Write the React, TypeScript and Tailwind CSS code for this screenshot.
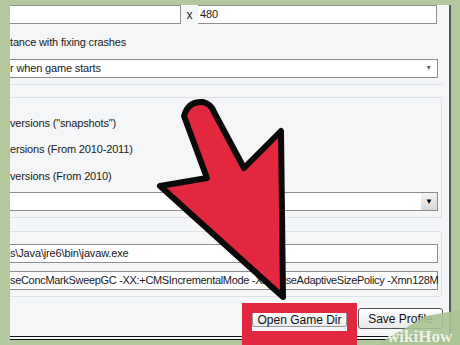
const font = { fontFamily: '"Liberation Sans", Arial, sans-serif' };

function Field({ children, className = "" }: { children?: React.ReactNode; className?: string }) {
  return (
    <div
      className={`flex h-[19px] items-center border border-l-0 border-[#8b8d8f] bg-white text-[11px] text-[#1a1a1a] ${className}`}
    >
      {children}
    </div>
  );
}

function Label({ children, className = "" }: { children: React.ReactNode; className?: string }) {
  return <div className={`h-[16px] text-[11px] leading-[16px] tracking-[-0.15px] text-[#1a1a1a] ${className}`}>{children}</div>;
}

function Arrow() {
  return (
    <svg className="pointer-events-none absolute left-0 top-0" width="460" height="345" viewBox="0 0 460 345">
      <path
        d="M184 116 Q188 101 203 102 Q211 104 214 112 L244 168 L281 131 L283 297 L160 186 L207 178 Z"
        fill="#e2283f"
        stroke="#0a0a0a"
        strokeWidth="6"
        strokeLinejoin="round"
      />
    </svg>
  );
}

export default function App() {
  return (
    <div className="relative h-[345px] w-[460px] overflow-hidden bg-[#b3c89c]" style={font}>
      <div className="ml-[10px] mt-[5px] flex h-[335px] w-[441px] flex-col border-r-2 border-[#4f5a48] bg-[#f5f6f7]">
        {/* resolution row */}
        <div className="flex h-[19px] items-center">
          <Field className="w-[171px]" />
          <span className="w-[17px] text-center text-[12px] text-[#222]">x</span>
          <Field className="w-[239px] border-l pl-[2px] tracking-[-0.15px]">480</Field>
        </div>

        <Label className="mt-[10px]">tance with fixing crashes</Label>

        <Field className="mt-[9px] w-[428px] justify-between pr-[5px] tracking-[-0.15px]">
          <span>r when game starts</span>
          <span className="text-[7px] text-[#666]">▼</span>
        </Field>
        <div className="mt-[5px] h-[2px] w-[432px] rounded-br-[3px] border-b border-r border-[#dde0e4]" />

        {/* versions group */}
        <div className="mt-[12px] flex h-[121px] w-[432px] flex-col rounded-r-[3px] border border-l-0 border-[#dde0e4] pt-[17px]">
          <Label>versions ("snapshots")</Label>
          <Label className="mt-[10px]">ersions (From 2010-2011)</Label>
          <Label className="mt-[11px]">versions (From 2010)</Label>
          <Field className="mt-[8px] w-[428px] justify-end">
            <span className="flex h-[17px] w-[16px] items-center justify-center bg-gradient-to-b from-[#f4f4f4] to-[#d8d8d8] text-[8px] text-black">▼</span>
          </Field>
        </div>

        {/* java group */}
        <div className="mt-[13px] flex h-[66px] w-[432px] flex-col rounded-r-[3px] border border-l-0 border-[#dde0e4] pt-[12px]">
          <Field className="w-[428px] tracking-[-0.15px]">s\Java\jre6\bin\javaw.exe</Field>
          <Field className="mt-[8px] w-[428px] whitespace-nowrap tracking-[-0.32px]">
            seConcMarkSweepGC -XX:+CMSIncrementalMode -XX:+UseAdaptiveSizePolicy -Xmn128M
          </Field>
        </div>

        {/* buttons */}
        <div className="mt-[11px] flex items-center pl-[242px]">
          <button className="h-[17px] w-[95px] rounded-[2px] border border-[#9a9a9a] bg-gradient-to-b from-white to-[#ececec] text-[12px] text-[#111]">
            Open Game Dir
          </button>
          <button className="ml-[11px] h-[21px] w-[85px] rounded-[3px] border border-[#555] bg-gradient-to-b from-white to-[#e9e9e9] text-[12px] text-[#111]">
            Save Profile
          </button>
        </div>

        <div className="mt-auto h-[4px] w-full border-y-[1.5px] border-[#111]" />
      </div>

      {/* red highlight around Open Game Dir */}
      <div className="pointer-events-none absolute left-[242px] top-[303px] h-[42px] w-[115px] border-[10px] border-b-[14px] border-[#e2283f]" />

      <Arrow />

      {/* wikiHow watermark */}
      <svg className="pointer-events-none absolute left-0 top-0" width="460" height="345" viewBox="0 0 460 345">
        <path d="M376 345 L426 316 L460 310 L460 345 Z" fill="#a9c392" opacity="0.9" />
      </svg>
      <div
        className="pointer-events-none absolute left-[387px] top-[328px] text-[17px] font-bold leading-none text-[#eef3e6]"
        style={{ fontFamily: '"Liberation Serif", serif' }}
      >
        wikiHow
      </div>
    </div>
  );
}
